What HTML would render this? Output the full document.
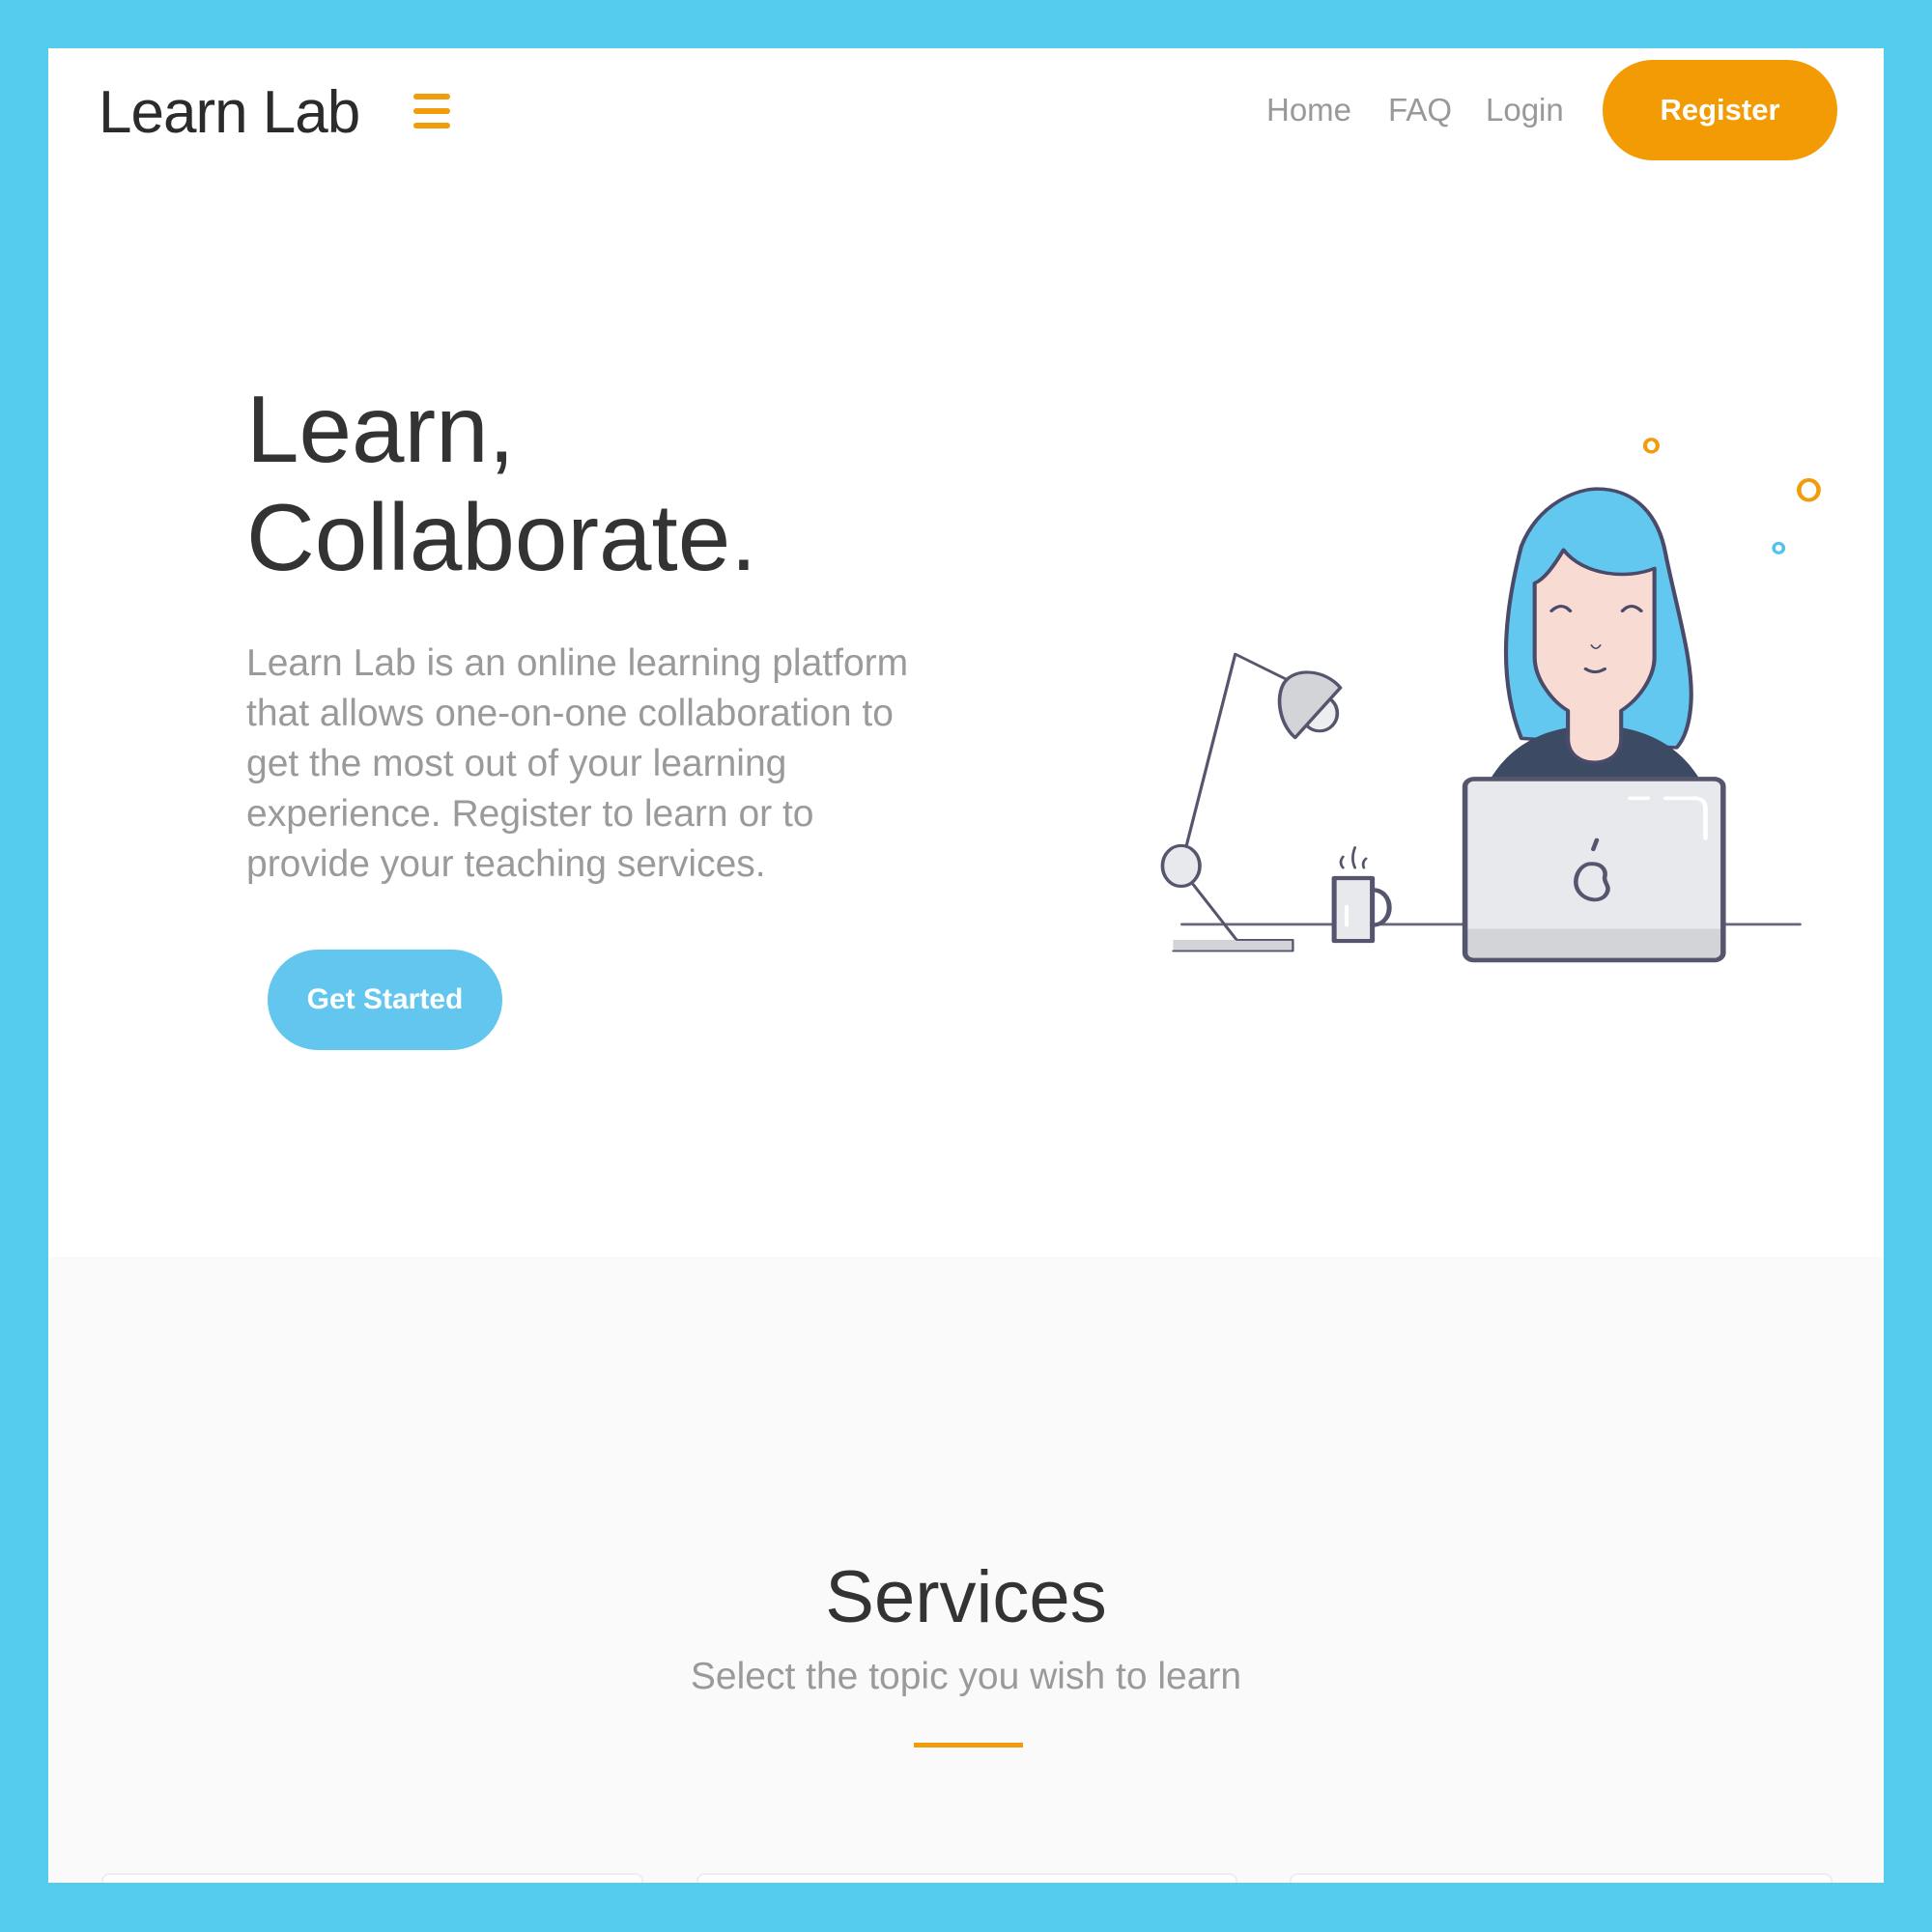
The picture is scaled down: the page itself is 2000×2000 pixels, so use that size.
<!DOCTYPE html>
<html><head><meta charset="utf-8"><style>
*{margin:0;padding:0;box-sizing:border-box}
html,body{width:2000px;height:2000px;overflow:hidden;background:#55cbee;font-family:"Liberation Sans",sans-serif}
.page{position:absolute;left:50px;top:50px;width:1900px;height:1899px;background:#fff;overflow:hidden}
.abs{position:absolute;white-space:nowrap}
.logo{left:52px;top:31px;font-size:62px;color:#2b2b2b;letter-spacing:-1px}
.ham{left:378px;top:47px;width:38px}
.ham i{display:block;height:6px;border-radius:3px;background:#f29b0b;margin-bottom:9px}
.nav{font-size:33px;color:#999;top:45px}
.reg{left:1609px;top:12px;width:243px;height:104px;border-radius:52px;background:#f29b05;color:#fff;font-size:31px;font-weight:bold;text-align:center;line-height:104px}
.h1{left:205px;top:338px;font-size:98px;line-height:112px;color:#333}
.p{left:205px;top:611px;font-size:39px;line-height:52px;color:#9a9a9a}
.gs{left:227px;top:933px;width:243px;height:104px;border-radius:52px;background:#62c6ef;color:#fff;font-size:30px;font-weight:bold;text-align:center;line-height:104px}
.gray{left:0;top:1251px;width:1900px;height:700px;background:#fafafa}
.svc{left:0;width:1900px;text-align:center;top:1560px;font-size:76px;color:#333}
.sub{left:0;width:1900px;text-align:center;top:1664px;font-size:39px;color:#9a9a9a}
.bar{left:896px;top:1754px;width:113px;height:5px;background:#f29b0b}
.card{top:1889px;height:40px;background:#fff;border:2px solid #eee;border-radius:8px}
</style></head><body>
<div class="page">
<div class="abs logo">Learn Lab</div>
<div class="abs ham"><i></i><i></i><i></i></div>
<div class="abs nav" style="left:1261px">Home</div>
<div class="abs nav" style="left:1387px">FAQ</div>
<div class="abs nav" style="left:1488px">Login</div>
<div class="abs reg">Register</div>
<div class="abs h1">Learn,<br>Collaborate.</div>
<div class="abs p">Learn Lab is an online learning platform<br>that allows one-on-one collaboration to<br>get the most out of your learning<br>experience. Register to learn or to<br>provide your teaching services.</div>
<div class="abs gs">Get Started</div>
<div class="abs gray"></div>
<div class="abs svc">Services</div>
<div class="abs sub">Select the topic you wish to learn</div>
<div class="abs bar"></div>
<div class="abs card" style="left:55px;width:561px"></div>
<div class="abs card" style="left:671px;width:560px"></div>
<div class="abs card" style="left:1285px;width:562px"></div>
<svg class="abs" style="left:1130px;top:370px" width="720" height="600" viewBox="0 0 1568 1568" preserveAspectRatio="none">
<g fill="none" stroke-linecap="round" stroke-linejoin="round">
<ellipse cx="1153" cy="108" rx="14" ry="17" stroke="#f29b0b" stroke-width="9"/>
<ellipse cx="1508" cy="228" rx="22" ry="27" stroke="#f29b0b" stroke-width="10"/>
<ellipse cx="1440" cy="385" rx="11" ry="13" stroke="#55c2ee" stroke-width="8"/>
<path d="M95,1403 H1488" stroke="#66667d" stroke-width="7"/>
<path d="M860,900 C800,720 830,520 860,380 C900,260 990,225 1030,225 C1120,225 1170,300 1185,400 C1210,550 1250,700 1242,810 C1238,870 1225,905 1210,925 Z" fill="#63c8ef" stroke="#4a4a6a" stroke-width="9"/>
<path d="M790,1010 C850,890 950,865 1025,865 C1100,865 1200,890 1262,1010 Z" fill="#3d4a63"/>
<path d="M890,480 L890,680 C890,740 930,800 965,825 L965,900 C965,950 1000,965 1025,965 C1050,965 1085,950 1085,900 L1085,825 C1130,790 1160,730 1160,680 L1160,440 C1100,470 1000,460 955,390 C930,440 910,470 890,480 Z" fill="#f8dcd3" stroke="#4a4a6a" stroke-width="9"/>
<path d="M928,555 Q950,530 970,555 M1088,555 Q1108,530 1130,555" stroke="#4a4a6a" stroke-width="8"/>
<path d="M1018,648 Q1028,665 1038,648" stroke="#4a4a6a" stroke-width="4"/>
<path d="M1005,712 Q1025,728 1048,712" stroke="#4a4a6a" stroke-width="8"/>
<rect x="733" y="1010" width="582" height="490" rx="20" fill="#e8e9ec"/>
<path d="M737,1415 H1311 V1480 Q1311,1496 1295,1496 H753 Q737,1496 737,1480 Z" fill="#d3d4d8"/>
<rect x="733" y="1010" width="582" height="490" rx="20" stroke="#55556d" stroke-width="12"/>
<path d="M1105,1062 H1145 M1185,1062 H1250 Q1275,1062 1275,1090 V1170" stroke="#fff" stroke-width="10"/>
<path d="M1010,1240 C985,1250 975,1290 990,1315 C1005,1340 1040,1345 1052,1320 C1062,1300 1045,1290 1048,1275 C1052,1255 1040,1235 1010,1240 Z M1022,1200 L1030,1175" stroke="#55556d" stroke-width="10"/>
<rect x="438" y="1278" width="86" height="170" fill="#e8e9ec" stroke="#55556d" stroke-width="11"/>
<path d="M524,1310 C575,1310 575,1405 524,1405" stroke="#55556d" stroke-width="11"/>
<path d="M466,1355 V1405" stroke="#fff" stroke-width="9"/>
<path d="M458,1250 Q448,1235 458,1220 M485,1250 Q475,1225 485,1195 M505,1250 Q500,1235 510,1225" stroke="#55556d" stroke-width="6"/>
<path d="M215,672 L105,1190 M215,672 L330,740 M120,1295 L218,1445" stroke="#55556d" stroke-width="7"/>
<rect x="75" y="1445" width="270" height="30" fill="#d3d4d8"/>
<path d="M75,1475 H345 V1445 H218" stroke="#55556d" stroke-width="5"/>
<ellipse cx="93" cy="1245" rx="42" ry="55" fill="#e8e9ec" stroke="#55556d" stroke-width="8"/>
<ellipse cx="405" cy="832" rx="40" ry="48" fill="#eceef0" stroke="#55556d" stroke-width="8"/>
<path d="M350,898 L452,763 C420,715 350,705 325,750 C305,790 315,860 350,898 Z" fill="#d3d4d8" stroke="#55556d" stroke-width="8"/>
</g></svg>
</div>
</body></html>
